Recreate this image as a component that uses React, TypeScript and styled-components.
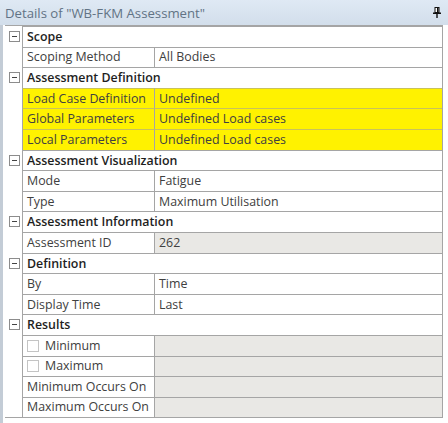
import React from "react";
import styled, { createGlobalStyle } from "styled-components";

const Global = createGlobalStyle`
  html, body { margin: 0; padding: 0; background: #ffffff; }
  body { font-family: "Open Sans", "Noto Sans", "Liberation Sans", sans-serif; }
`;

const Window = styled.div`
  width: 448px;
  height: 423px;
  background: #ffffff;
  display: flex;
  flex-direction: column;
  overflow: hidden;
`;

const TitleBar = styled.div`
  height: 25px;
  flex: 0 0 25px;
  box-sizing: border-box;
  display: flex;
  align-items: center;
  justify-content: space-between;
  padding: 0 7px 0 5px;
  background: linear-gradient(#dfe9f4, #d2deeb);
  color: #627385;
  font-size: 13.2px;
`;

const Body = styled.div`
  flex: 1;
  display: flex;
  border-left: 3px solid #c3ccd6;
  padding-left: 2px;
  padding-right: 5px;
`;

const Grid = styled.div`
  flex: 1;
  align-self: flex-start;
  border-top: 1px solid #a5a5a5;
  border-right: 1px solid #a5a5a5;
  border-bottom: 1px solid #a5a5a5;
`;

const Row = styled.div`
  display: grid;
  grid-template-columns: 17px 132px 1fr;
  height: 20.6px;
  font-size: 12.4px;
  line-height: 20px;
  color: #404040;
`;

const Gutter = styled.div`
  display: flex;
  align-items: center;
  justify-content: center;
  padding-left: 1px;
`;

const Expander = styled.span`
  width: 9px;
  height: 9px;
  border: 1px solid #8c8c8c;
  background: #ffffff;
  display: flex;
  align-items: center;
  justify-content: center;
  &::after {
    content: "";
    width: 5px;
    height: 1px;
    background: #444;
  }
`;

const Heading = styled.div`
  grid-column: 2 / 4;
  border-top: 1px solid #a5a5a5;
  border-left: 1px solid #a5a5a5;
  padding-left: 4px;
  font-weight: 600;
  color: #1e1e1e;
  white-space: nowrap;
`;

const Cell = styled.div<{ $tone?: "plain" | "warn" | "locked" }>`
  box-sizing: border-box;
  border-top: 1px solid ${(p) => (p.$tone === "warn" ? "#c9c25a" : "#a5a5a5")};
  border-left: 1px solid #a5a5a5;
  padding-left: 4px;
  white-space: nowrap;
  overflow: hidden;
  display: flex;
  align-items: center;
  gap: 6px;
  background: ${(p) =>
    p.$tone === "warn" ? "#fff200" : p.$tone === "locked" ? "#e9e8e5" : "#ffffff"};
`;

const Check = styled.span`
  width: 10px;
  height: 10px;
  border: 1px solid #c4c4c4;
  background: #ffffff;
  flex: 0 0 auto;
`;

const Pin = () => (
  <svg width="8" height="11" viewBox="0 0 8 11" fill="none">
    <rect x="2" y="0.5" width="4" height="5" stroke="#111" strokeWidth="1" fill="#fff" />
    <rect x="4" y="1" width="1.5" height="4" fill="#111" />
    <rect x="0" y="5.5" width="8" height="1.5" fill="#111" />
    <rect x="3.3" y="7" width="1.4" height="4" fill="#111" />
  </svg>
);

type Item = {
  label: string;
  value?: string;
  tone?: "plain" | "warn" | "locked";
  check?: boolean;
};

type Section = { title: string; items: Item[] };

const sections: Section[] = [
  { title: "Scope", items: [{ label: "Scoping Method", value: "All Bodies" }] },
  {
    title: "Assessment Definition",
    items: [
      { label: "Load Case Definition", value: "Undefined", tone: "warn" },
      { label: "Global Parameters", value: "Undefined Load cases", tone: "warn" },
      { label: "Local Parameters", value: "Undefined Load cases", tone: "warn" },
    ],
  },
  {
    title: "Assessment Visualization",
    items: [
      { label: "Mode", value: "Fatigue" },
      { label: "Type", value: "Maximum Utilisation" },
    ],
  },
  {
    title: "Assessment Information",
    items: [{ label: "Assessment ID", value: "262", tone: "locked" }],
  },
  {
    title: "Definition",
    items: [
      { label: "By", value: "Time" },
      { label: "Display Time", value: "Last" },
    ],
  },
  {
    title: "Results",
    items: [
      { label: "Minimum", tone: "locked", check: true },
      { label: "Maximum", tone: "locked", check: true },
      { label: "Minimum Occurs On", tone: "locked" },
      { label: "Maximum Occurs On", tone: "locked" },
    ],
  },
];

export default function App() {
  return (
    <Window>
      <Global />
      <TitleBar>
        <span>Details of "WB-FKM Assessment"</span>
        <Pin />
      </TitleBar>
      <Body>
        <Grid>
          {sections.map((s) => (
            <React.Fragment key={s.title}>
              <Row>
                <Gutter>
                  <Expander />
                </Gutter>
                <Heading>{s.title}</Heading>
              </Row>
              {s.items.map((it) => (
                <Row key={it.label}>
                  <Gutter />
                  <Cell $tone={it.tone === "warn" ? "warn" : "plain"}>
                    {it.check && <Check />}
                    {it.label}
                  </Cell>
                  <Cell $tone={it.tone}>{it.value}</Cell>
                </Row>
              ))}
            </React.Fragment>
          ))}
        </Grid>
      </Body>
    </Window>
  );
}
